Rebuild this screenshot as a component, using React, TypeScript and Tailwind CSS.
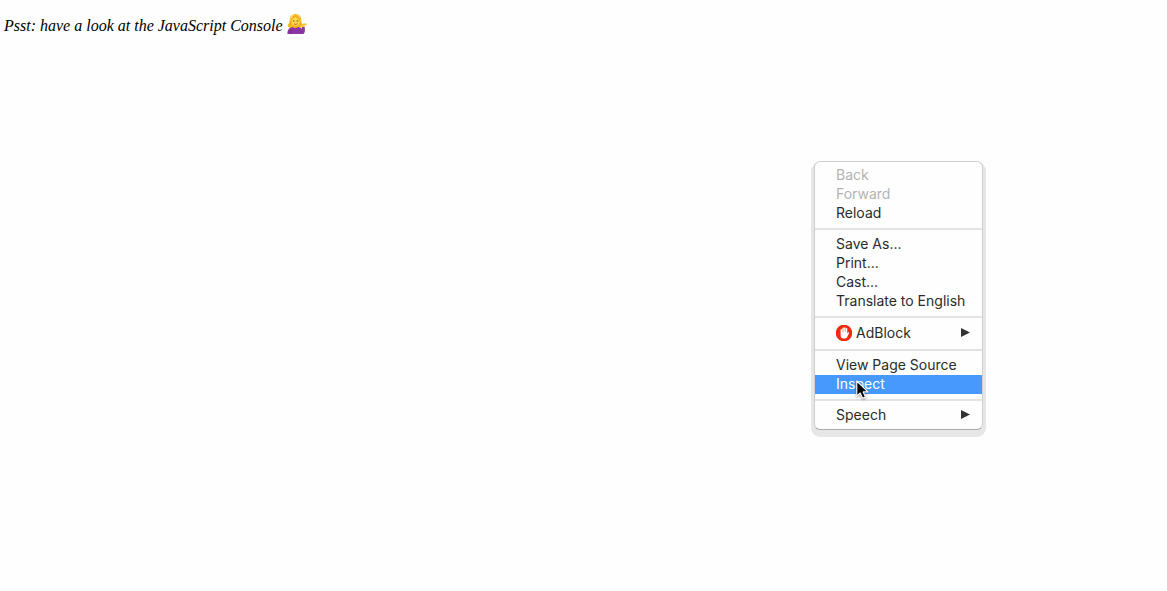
import type { ReactNode } from 'react';

function PersonIcon() {
  return (
    <svg viewBox="0 0 20 20" className="h-5 w-5" role="img" aria-label="Person tipping hand">
      <path d="M3 3.800C3.800 1.200 6 0 8.500 0c3.700 0 5.600 2.300 5.700 5.200 0 2.300.6 4 1.300 5.500-.3 2-1.800 3.300-3.700 3.300H3.500C1.800 14 .6 12.500 .6 10.800 2 9.900 2.500 8 2.500 6.500c0-1 .1-1.900.5-2.700Z" fill="#f7bb22" />
      <path d="M3.200 4.300C4 1.800 6 .5 8.300.6 6.800 2.300 5.500 4.300 3.400 6Z" fill="#ffdc5e" />
      <path d="M9 .6c2.800.4 4 2.200 4.200 4.700L10.500 2.600Z" fill="#ffd750" />
      <path d="M2 11.800c1.800-.8 2-2.300 2-4M13 7.500c.2 1.600.4 3 1.300 4" stroke="#dd961b" strokeWidth=".7" fill="none" />
      <path d="M6.500 10h4v4l-2 1.500L6 14Z" fill="#f2ae2a" />
      <ellipse cx="8.600" cy="7.400" rx="4.100" ry="4.500" fill="#ffd84c" />
      <path d="M4.300 6.500C5 4.600 7 4.300 8.500 2.500c1 1.700 3 2 4.400 4.500L12.500 4 10 1.600H7L4.400 4Z" fill="#f0aa1b" />
      <path d="M5.900 7h1.600M9.700 7h1.600" stroke="#6b4417" strokeWidth="1.100" />
      <path d="M7 9.700c1.200 1 2.200 1 3.400 0" stroke="#c9493c" strokeWidth=".9" fill="none" />
      <path d="M.5 19.900C.2 16.300 1.700 13.800 5.500 13c1.700 1.500 4 1.500 5.500.1 1.800.3 3 .9 3.900 1.800l-.1-2.200h2.800c.7 3.300.3 6.500-1.200 7.200Z" fill="#8a35a0" />
      <path d="M3.700 19.700c-.3-1.300-.2-2.300 0-3.300M14.500 18.700l-.6-2.300" stroke="#6b2080" strokeWidth=".7" fill="none" />
      <path d="m14.800 12.900-.3-2c.3-.9 1-1.400 2.100-1.500l2.900.2c.6.400.3 1.200-.4 1.400l-1.700.5.200 1.400Z" fill="#ffc431" />
    </svg>
  );
}

function AdBlockIcon() {
  return (
    <svg viewBox="0 0 16 16" className="h-4 w-4" aria-hidden="true">
      <path d="M5.500 0h5L13.300 1.500 15.300 4 16 6v4l-.7 2-2 2.500L10.500 16h-5L2.700 14.500.7 12 0 10V6l.7-2 2-2.500Z" fill="#ee2a11" />
      <path
        d="M4.600 9V4.700c0-.9 1.400-.9 1.400 0V7h.3V3.200c0-.9 1.500-.9 1.500 0V7h.3V2.800c0-.9 1.500-.9 1.500 0V7h.3V3.600c0-.9 1.400-.9 1.400 0v5l.8-1c.5-.6 1.300-.2 1 .5l-1.600 3.500c-.5 1.300-1.300 1.900-2.700 1.900H7.800C5.800 13.500 4.600 12.300 4.600 10.500Z"
        fill="#fff"
      />
    </svg>
  );
}

function Cursor() {
  return (
    <svg viewBox="0 0 14 20" className="pointer-events-none absolute top-[5px] left-5 h-5 w-[14px] drop-shadow-[0_1px_1px_rgba(0,0,0,0.4)]" aria-hidden="true">
      <path d="M.8 1v15.200l3.400-3.200 2.400 5.300 2.900-1.300-2.300-5.100h4.700Z" fill="#000" stroke="#fff" strokeWidth="1.100" strokeLinejoin="round" />
    </svg>
  );
}

function SubmenuArrow() {
  return (
    <svg viewBox="0 0 9 9" className="ml-auto h-[9px] w-[9px]" aria-hidden="true">
      <path d="M0 0v9l9-4.500Z" fill="#333" />
    </svg>
  );
}

type ItemProps = {
  children: ReactNode;
  disabled?: boolean;
  submenu?: boolean;
  active?: boolean;
  icon?: ReactNode;
};

function Item({ children, disabled, submenu, active, icon }: ItemProps) {
  return (
    <button
      type="button"
      role="menuitem"
      disabled={disabled}
      aria-haspopup={submenu ? 'menu' : undefined}
      className={`flex w-full items-center gap-1 pr-3 pb-0.5 pl-[21px] text-left whitespace-nowrap ${icon ? 'h-[21px]' : 'h-[19px]'} ${
        active ? 'bg-[#4899fd] text-white' : 'text-[#2b2b2b] disabled:text-[#b4b4b4]'
      }`}
    >
      {icon}
      <span className="relative">
        {children}
        {active && <Cursor />}
      </span>
      {submenu && <SubmenuArrow />}
    </button>
  );
}

function Separator() {
  return <div role="separator" className="my-[5px] h-0.5 bg-[#e3e3e3]" />;
}

export default function App() {
  return (
    <main className="relative min-h-screen bg-[#fefefe]">
      <p className="flex items-start gap-1 px-1 pt-3.5 font-['Liberation_Serif',serif] text-base leading-6 text-black italic">
        Psst: have a look at the JavaScript Console
        <PersonIcon />
      </p>
      <div
        role="menu"
        aria-label="Page"
        className="absolute top-[161px] left-[814px] w-[169px] rounded-md border border-[#cfcfcf] border-b-[#aaa] bg-[#fefefe] py-1 font-['Inter',sans-serif] text-sm leading-[17px] shadow-[0_4px_0_3px_#e6e6e6]"
      >
        <Item disabled>Back</Item>
        <Item disabled>Forward</Item>
        <Item>Reload</Item>
        <Separator />
        <Item>Save As...</Item>
        <Item>Print...</Item>
        <Item>Cast...</Item>
        <Item>Translate to English</Item>
        <Separator />
        <Item submenu icon={<AdBlockIcon />}>AdBlock</Item>
        <Separator />
        <Item>View Page Source</Item>
        <Item active>Inspect</Item>
        <Separator />
        <Item submenu>Speech</Item>
      </div>
    </main>
  );
}
